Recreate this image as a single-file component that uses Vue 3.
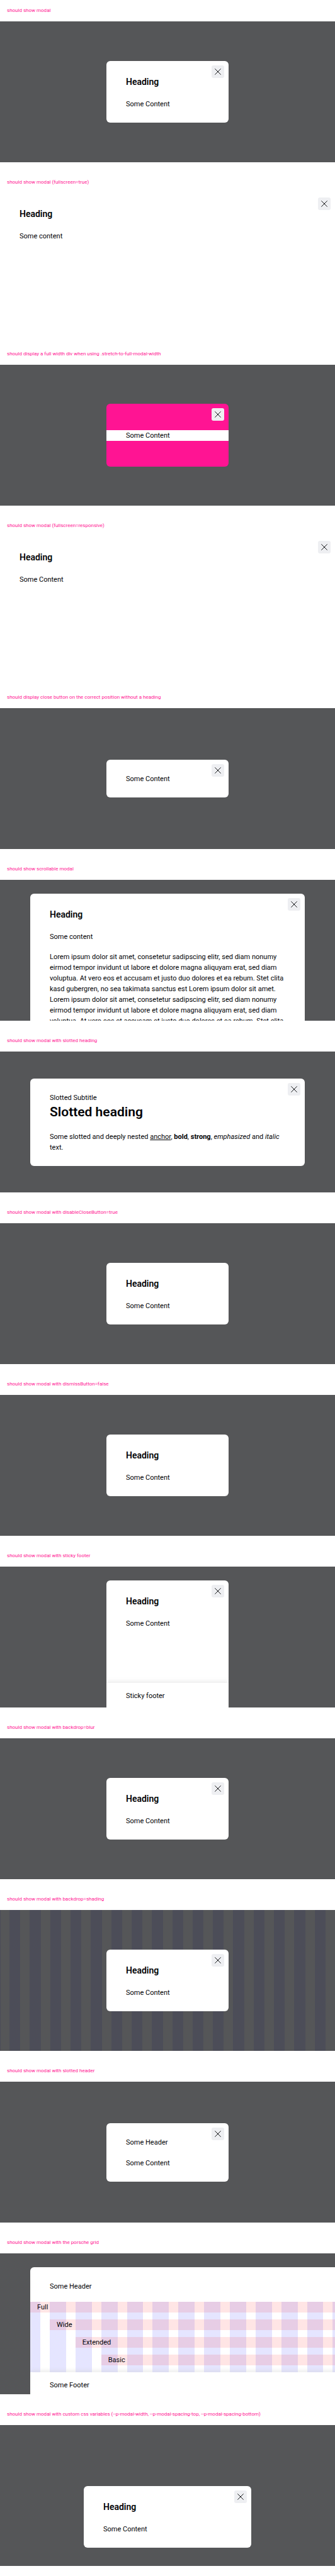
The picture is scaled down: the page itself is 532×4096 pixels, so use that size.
<script setup>
const lorem = [
  'Lorem ipsum dolor sit amet, consetetur sadipscing elitr, sed diam nonumy',
  'eirmod tempor invidunt ut labore et dolore magna aliquyam erat, sed diam',
  'voluptua. At vero eos et accusam et justo duo dolores et ea rebum. Stet clita',
  'kasd gubergren, no sea takimata sanctus est Lorem ipsum dolor sit amet.',
  'Lorem ipsum dolor sit amet, consetetur sadipscing elitr, sed diam nonumy',
  'eirmod tempor invidunt ut labore et dolore magna aliquyam erat, sed diam',
  'voluptua. At vero eos et accusam et justo duo dolores et ea rebum. Stet clita',
]

const cases = [
  { title: 'should show modal', heading: 'Heading', text: 'Some Content', close: true },
  { title: 'should show modal (fullscreen=true)', stage: 'plain', modal: 'full', heading: 'Heading', text: 'Some content', close: true },
  { title: 'should display a full width div when using .stretch-to-full-modal-width', modal: 'pink', stretch: 'Some Content', close: true },
  { title: 'should show modal (fullscreen=responsive)', stage: 'plain', modal: 'full', heading: 'Heading', text: 'Some Content', close: true },
  { title: 'should display close button on the correct position without a heading', text: 'Some Content', close: true },
  { title: 'should show scrollable modal', stage: 'scroll', modal: 'wide', heading: 'Heading', text: 'Some content', lorem: true, close: true },
  { title: 'should show modal with slotted heading', modal: 'wide', slotted: true, close: true },
  { title: 'should show modal with disableCloseButton=true', heading: 'Heading', text: 'Some Content' },
  { title: 'should show modal with dismissButton=false', heading: 'Heading', text: 'Some Content' },
  { title: 'should show modal with sticky footer', stage: 'scroll', heading: 'Heading', text: 'Some Content', footer: 'Sticky footer', close: true },
  { title: 'should show modal with backdrop=blur', heading: 'Heading', text: 'Some Content', close: true },
  { title: 'should show modal with backdrop=shading', stage: 'shading', heading: 'Heading', text: 'Some Content', close: true },
  { title: 'should show modal with slotted header', header: 'Some Header', text: 'Some Content', close: true },
  { title: 'should show modal with the porsche grid', stage: 'scroll', modal: 'overflowing', header: 'Some Header', grid: true, footer: 'Some Footer' },
  {
    title: 'should show modal with custom css variables (--p-modal-width, --p-modal-spacing-top, --p-modal-spacing-bottom)',
    stage: 'low', modal: 'custom', heading: 'Heading', text: 'Some Content', close: true,
  },
]

const gridRows = ['Full', 'Wide', 'Extended', 'Basic']
</script>

<template>
  <main class="page">
    <section v-for="c in cases" :key="c.title" class="case">
      <h2 class="title">{{ c.title }}</h2>
      <div class="stage" :class="c.stage">
        <div v-if="c.stage === 'shading'" class="stripes" aria-hidden="true">
          <i v-for="n in 16" :key="n"></i>
        </div>
        <div class="modal" :class="c.modal" role="dialog" :aria-label="c.title">
          <button v-if="c.close" class="close" type="button" aria-label="Dismiss modal">
            <svg viewBox="0 0 10 10" aria-hidden="true"><path d="M.3.3l9.4 9.4M9.7.3L.3 9.7" /></svg>
          </button>
          <header v-if="c.heading || c.header" class="header">
            <h3 v-if="c.heading" class="heading">{{ c.heading }}</h3>
            <p v-else>{{ c.header }}</p>
          </header>
          <header v-if="c.slotted" class="header">
            <p>Slotted Subtitle</p>
            <h3 class="heading large">Slotted heading</h3>
          </header>
          <div v-if="c.stretch" class="stretch">{{ c.stretch }}</div>
          <p v-if="c.text">{{ c.text }}</p>
          <p v-if="c.slotted" class="lines">
            Some slotted and deeply nested <a href="#">anchor</a>, <b>bold</b>, <strong>strong</strong>, <em>emphasized</em> and <i>italic</i><br />text.
          </p>
          <p v-if="c.lorem" class="lines lorem">
            <template v-for="(line, n) in lorem" :key="n">{{ line }}<br /></template>
          </p>
          <div v-if="c.grid" class="grid">
            <span v-for="n in 16" :key="n" class="column" :style="{ gridColumn: n }"></span>
            <span
              v-for="(name, n) in gridRows"
              :key="name"
              class="row"
              :style="{ gridRow: n + 1, gridColumn: `${n + 1} / ${17 - n}` }"
            >{{ name }}</span>
          </div>
          <footer v-if="c.footer" class="footer">{{ c.footer }}</footer>
        </div>
      </div>
    </section>
  </main>
</template>

<style>
body {
  margin: 0;
  background: #fff;
}
</style>

<style scoped>
.page {
  font: 11px/17px Roboto, "Liberation Sans", sans-serif;
  color: #010205;
  overflow: hidden;
  padding-bottom: 1px;
}
h2,
h3,
p {
  margin: 0;
}
.case {
  padding-bottom: 15px;
}
.title {
  padding: 9px 11px;
  font-size: 8px;
  font-weight: 400;
  line-height: 16px;
  color: #ff1493;
  white-space: nowrap;
}
.stage {
  position: relative;
  display: flex;
  align-items: center;
  height: 224px;
  overflow: hidden;
  background: #555658;
}
.stage.plain {
  align-items: stretch;
  background: #fff;
}
.stage.scroll {
  align-items: stretch;
  padding-top: 22px;
  box-sizing: border-box;
}
.stage.low {
  align-items: flex-end;
  padding-bottom: 29px;
  box-sizing: border-box;
}
.stripes {
  position: absolute;
  inset: 0;
  display: grid;
  grid-template-columns: repeat(16, 1fr);
  gap: 15px;
  padding: 0 15px;
  box-shadow: inset 1px 0 #4c4d58;
}
.stripes i {
  background: #4c4d58;
}
.modal {
  position: relative;
  display: flex;
  flex-direction: column;
  box-sizing: border-box;
  width: 194px;
  margin: 0 auto;
  padding: 22px 31px 21px;
  border-radius: 6px;
  overflow: hidden;
  background: #fff;
}
.modal.wide {
  flex: 1;
  width: auto;
  margin: 0 48px;
}
.modal.full {
  flex: 1;
  border-radius: 0;
}
.modal.custom {
  width: 50%;
}
.modal.pink {
  padding: 42px 0 41px;
  background: #ff1493;
}
.scroll .modal {
  padding-bottom: 0;
  border-radius: 6px 6px 0 0;
}
.modal.overflowing {
  flex: none;
  width: 619px;
  margin: 0 0 0 48px;
}
.close {
  position: absolute;
  top: 7px;
  right: 7px;
  display: grid;
  place-items: center;
  width: 20px;
  height: 20px;
  padding: 0;
  border: 0;
  border-radius: 3px;
  background: #eeeff2;
  cursor: pointer;
}
.close svg {
  width: 10px;
  height: 10px;
  fill: none;
  stroke: #010205;
  stroke-width: 0.9;
}
.header {
  margin-bottom: 16px;
}
.heading {
  font-size: 14px;
  font-weight: 600;
  line-height: 22px;
}
.heading.large {
  font-size: 21px;
  line-height: 29px;
}
.stretch {
  padding: 0 31px;
  background: #fff;
}
.lines {
  white-space: nowrap;
}
.lines a {
  color: inherit;
}
.lorem {
  margin-top: 15px;
}
.grid {
  flex: 1;
  display: grid;
  grid-template-columns: 16px repeat(14, 1fr) 16px;
  grid-template-rows: repeat(4, 17px) 1fr;
  gap: 11px 15px;
  margin: 0 -31px;
}
.column {
  grid-row: 1 / -1;
  background: rgba(0, 0, 255, 0.1);
}
.row {
  padding-left: 11px;
  background: rgba(255, 0, 0, 0.1);
}
.footer {
  position: relative;
  margin: auto -31px 0;
  padding: 12px 31px 10px;
  background: #fff;
  box-shadow: 0 -3px 6px rgba(204, 204, 204, 0.35);
}
</style>
